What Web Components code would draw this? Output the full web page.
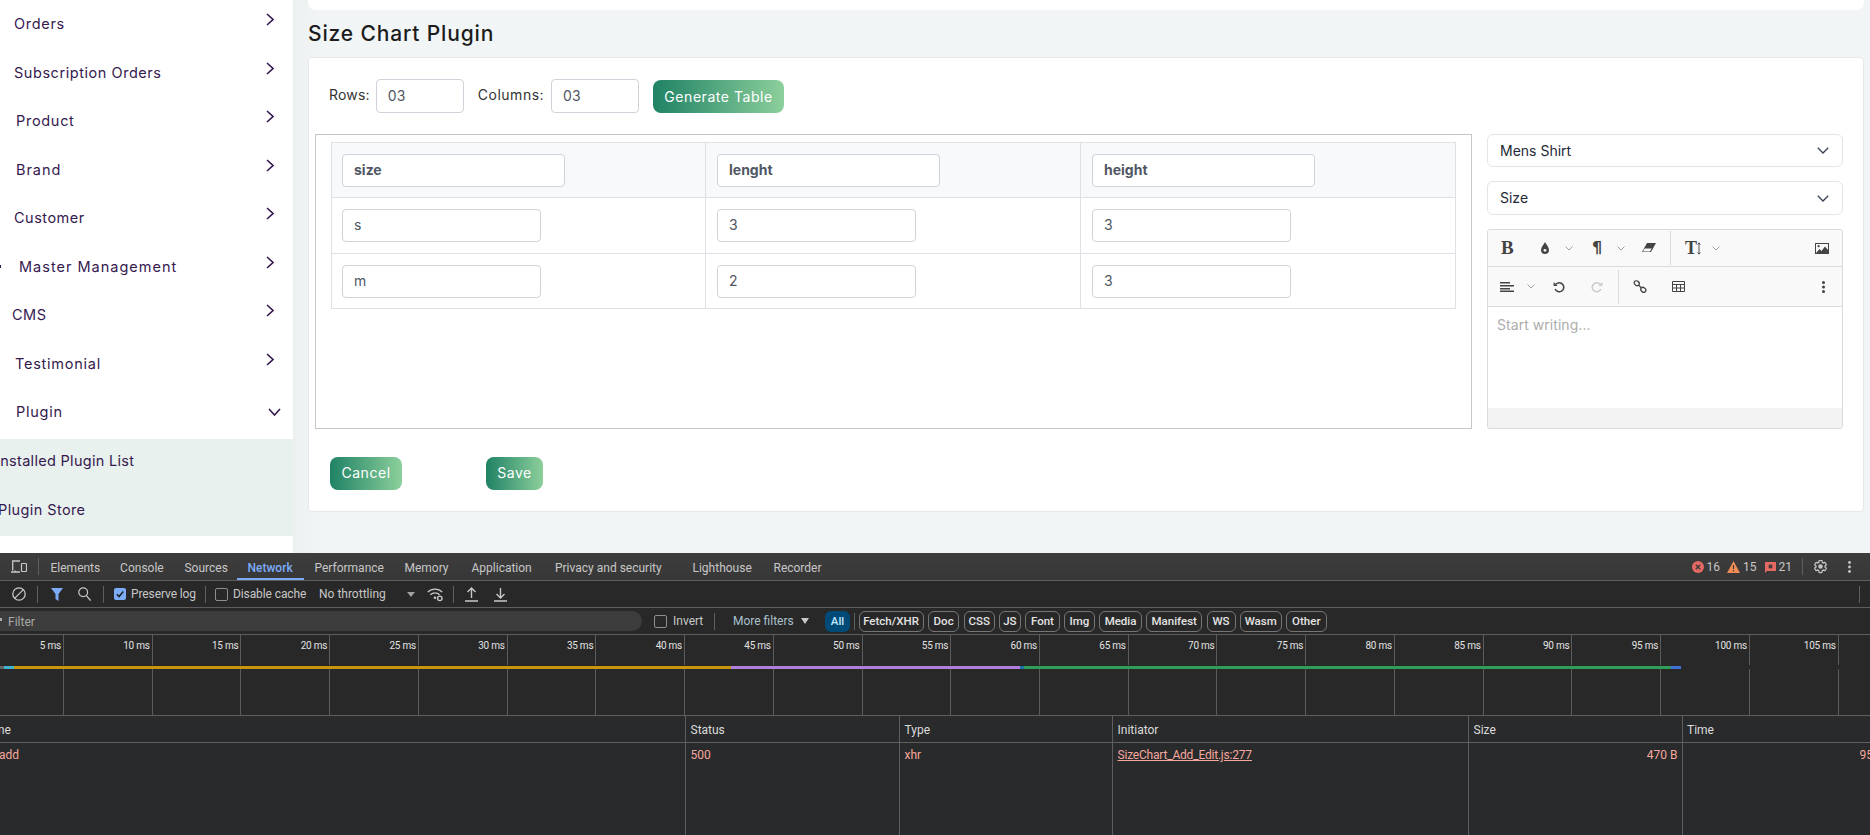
<!DOCTYPE html>
<html>
<head>
<meta charset="utf-8">
<title>Size Chart Plugin</title>
<style>
  html, body { margin: 0; height: 100%; overflow: hidden; background: #f1f5f6; }
  body { font-family: Inter, "Liberation Sans", sans-serif; }
</style>
</head>
<body>
<app-page></app-page>

<script>
const chevRight = `<svg width="8" height="13" viewBox="0 0 8 13"><path d="M1 1l6 5.5L1 12" fill="none" stroke="currentColor" stroke-width="1.6"/></svg>`;
const chevDown = `<svg width="13" height="8" viewBox="0 0 13 8"><path d="M1 1l5.5 6L12 1" fill="none" stroke="currentColor" stroke-width="1.6"/></svg>`;

class BaseElement extends HTMLElement {
  connectedCallback() {
    if (this.shadowRoot) return;
    this.attachShadow({ mode: 'open' });
    this.shadowRoot.innerHTML = `<style>${this.styles()}</style>${this.markup()}`;
  }
  styles() { return ':host { display: block; }'; }
  markup() { return '<slot></slot>'; }
}

class SideItem extends BaseElement {
  styles() {
    return `
      :host { display: flex; align-items: center; height: 48.5px; color: #35194f;
        font: 400 14.5px Inter, sans-serif; letter-spacing: .5px; white-space: nowrap; box-sizing: border-box; }
      :host([sub]) { padding-bottom: 5px; }
      .txt { flex: 1; margin-top: 1px; }
      .arrow { display: flex; margin: 0 19px 7px 0; }
      :host([open]) .arrow { margin: 2px 12px 0 0; }
    `;
  }
  markup() {
    const pad = this.getAttribute('pad') || 0;
    let arrow = '';
    if (this.hasAttribute('open')) arrow = `<span class="arrow">${chevDown}</span>`;
    else if (!this.hasAttribute('sub')) arrow = `<span class="arrow">${chevRight}</span>`;
    return `<span class="txt" style="margin-left:${pad}px"><slot></slot></span>${arrow}`;
  }
}

class AppSidebar extends BaseElement {
  styles() {
    return `
      :host { display: block; width: 293px; flex: none; background: #fff; overflow: hidden; position: relative; }
      .list { margin-top: -1px; }
      .sub { margin-top: 3px; height: 97px; background: #e9f1ee; }
      .stub { position: absolute; left: 0; top: 265px; width: 1px; height: 3px; background: #35194f; }
    `;
  }
  markup() {
    return `
      <span class="stub"></span>
      <div class="list">
        <side-item pad="14" style="letter-spacing:.7px">Orders</side-item>
        <side-item pad="14" style="letter-spacing:.55px">Subscription Orders</side-item>
        <side-item pad="16" style="letter-spacing:.7px">Product</side-item>
        <side-item pad="16" style="letter-spacing:.95px">Brand</side-item>
        <side-item pad="14">Customer</side-item>
        <side-item pad="19" style="letter-spacing:1px">Master Management</side-item>
        <side-item pad="12">CMS</side-item>
        <side-item pad="15" style="letter-spacing:.75px">Testimonial</side-item>
        <side-item pad="16" style="letter-spacing:.75px" open>Plugin</side-item>
        <div class="sub">
          <side-item pad="-4" sub style="letter-spacing:.3px">Installed Plugin List</side-item>
          <side-item pad="-2" sub style="letter-spacing:.4px">Plugin Store</side-item>
        </div>
      </div>
    `;
  }
}

class InputBox extends BaseElement {
  styles() {
    return `
      :host { display: flex; align-items: center; box-sizing: border-box; height: 33px; padding: 0 0 2px 11px;
        background: #fff; border: 1px solid #ced4da; border-radius: 4px;
        font: 400 14px Inter, sans-serif; color: #4f5763; }
      :host([bold]) { font-weight: 700; }
    `;
  }
}

class GradButton extends BaseElement {
  styles() {
    return `
      :host { display: flex; align-items: center; justify-content: center; box-sizing: border-box; height: 33px; flex: none;
        border-radius: 8px; background: linear-gradient(90deg, #1f8265, #8ccf9b);
        color: #fff; font: 400 14px Inter, sans-serif; letter-spacing: .55px; }
    `;
  }
}

class SizeTable extends BaseElement {
  styles() {
    return `
      :host { display: block; flex: none; box-sizing: border-box; width: 1157px; height: 295px;
        border: 1px solid #c6c6c6; padding: 7px 0 0 15px; }
      .grid { display: grid; grid-template-columns: 374px 375px 374px; grid-template-rows: 55px 56px 55px;
        width: 1125px; box-sizing: border-box; border: solid #dee2e6; border-width: 1px 1px 0 1px; }
      .c { border-bottom: 1px solid #dee2e6; border-right: 1px solid #dee2e6; padding: 0 10px; display: flex; align-items: center; box-sizing: border-box; }
      .c:nth-child(3n) { border-right: 0; }
      .c:not(:nth-child(3n+1)) { padding-left: 11px; }
      .h { background: #f8f9fa; }
      .wide { width: 223px; }
      .cell { width: 199px; }
    `;
  }
  markup() {
    const head = ['size', 'lenght', 'height'];
    const rows = [['s', '3', '3'], ['m', '2', '3']];
    return `<div class="grid">
      ${head.map(t => `<div class="c h"><input-box class="wide" bold>${t}</input-box></div>`).join('')}
      ${rows.flat().map(t => `<div class="c"><input-box class="cell">${t}</input-box></div>`).join('')}
    </div>`;
  }
}

class PickSelect extends BaseElement {
  styles() {
    return `
      :host { display: flex; align-items: center; justify-content: space-between; box-sizing: border-box;
        height: 33px; padding: 0 13px 0 12px; border: 1px solid #e1e4e9; border-radius: 6px; background: #fff;
        font: 400 14px Inter, sans-serif; color: #1f2937; }
      span { padding-bottom: 1px; }
      svg { color: #374151; }
    `;
  }
  markup() {
    return `<span><slot></slot></span><svg width="12" height="7" viewBox="0 0 12 7"><path d="M.8.8L6 6 11.2.8" fill="none" stroke="currentColor" stroke-width="1.3"/></svg>`;
  }
}

class TextEditor extends BaseElement {
  styles() {
    return `
      :host { display: flex; flex-direction: column; box-sizing: border-box; height: 200px; flex: none;
        border: 1px solid #dadada; border-radius: 3px; background: #fff; overflow: hidden; }
      .bar { display: flex; align-items: center; box-sizing: border-box; height: 37px; flex: none; background: #f9f9f9; border-bottom: 1px solid #dadada; color: #444; }
      .bar.two { height: 40px; }
      .bar > * { flex: none; }
      .div { width: 1px; height: 34px; background: #dadada; }
      .mini { color: #a0a0a0; }
      .b { font: 700 19px "Liberation Serif", serif; width: 12px; line-height: 20px; }
      .p { font: 700 16px "DejaVu Sans", sans-serif; width: 9px; line-height: 20px; }
      .tt { display: flex; align-items: center; width: 16px; font: 700 18px "Liberation Serif", serif; line-height: 20px; }
      .tt svg { flex: none; margin-left: 0; }
      .body { flex: 1; padding: 9px 9px; font: 400 14px Inter, sans-serif; letter-spacing: .05px; color: #adadad; }
      .status { height: 20px; flex: none; background: #f3f3f3; }
    `;
  }
  markup() {
    const mini = ml => `<svg class="mini" style="margin-left:${ml}px" width="8" height="5" viewBox="0 0 8 5"><path d="M.5.5L4 4 7.5.5" fill="none" stroke="currentColor" stroke-width="1"/></svg>`;
    return `
      <div class="bar">
        <span class="b" style="margin-left:13px">B</span>
        <svg style="margin-left:28px" width="8" height="12" viewBox="0 0 8 12"><path d="M4 0C3 2.4 0 5 0 8a4 4 0 0 0 8 0C8 5 5 2.4 4 0z" fill="#444"/><circle cx="4" cy="8.3" r="1.4" fill="#f9f9f9"/></svg>
        ${mini(16)}
        <span class="p" style="margin-left:19px">¶</span>
        ${mini(16)}
        <svg style="margin-left:17px" width="14" height="10" viewBox="0 0 14 10"><path d="M5 0h9L9 9H0z" fill="#444"/><path d="M2.6 5.4L1 8.4h7l1.7-3z" fill="#f9f9f9"/></svg>
        <span class="div" style="margin-left:14px"></span>
        <span class="tt" style="margin-left:14px">T<svg width="4" height="13" viewBox="0 0 4 13"><path d="M2 1v11M.6 2.6L2 .8l1.4 1.8M.6 10.4L2 12.2l1.4-1.8" fill="none" stroke="#444" stroke-width=".9"/></svg></span>
        ${mini(11)}
        <svg style="margin:0 13px 0 auto" width="14" height="11" viewBox="0 0 14 11"><rect x=".5" y=".5" width="13" height="10" fill="none" stroke="#444"/><path d="M1 10l3.5-4 2 2L10 3.5 13 7v3z" fill="#444"/><circle cx="3.6" cy="3.2" r="1.1" fill="#444"/></svg>
      </div>
      <div class="bar two">
        <svg style="margin-left:12px" width="14" height="10" viewBox="0 0 14 10"><path d="M0 .75h10M0 3.75h14M0 6.75h10M0 9.25h14" stroke="#444" stroke-width="1.4"/></svg>
        ${mini(13)}
        <svg style="margin-left:18px" width="12" height="12" viewBox="0 0 12 12"><path d="M3 3.1A4.5 4.5 0 1 1 2.1 8" fill="none" stroke="#444" stroke-width="1.6"/><path d="M.6 1v4h4z" fill="#444"/></svg>
        <svg style="margin-left:26px" width="12" height="12" viewBox="0 0 12 12"><path d="M9 3.1A4.5 4.5 0 1 0 9.9 8" fill="none" stroke="#ccc" stroke-width="1.6"/><path d="M11.4 1v4h-4z" fill="#ccc"/></svg>
        <span class="div" style="margin-left:15px"></span>
        <svg style="margin-left:14px" width="14" height="13" viewBox="0 0 14 13"><g fill="none" stroke="#444" stroke-width="1.3"><ellipse cx="3.7" cy="3.2" rx="2.7" ry="2.2" transform="rotate(35 3.7 3.2)"/><ellipse cx="10.3" cy="9.8" rx="2.7" ry="2.2" transform="rotate(35 10.3 9.8)"/><path d="M5.5 5l3 3"/></g></svg>
        <svg style="margin-left:25px" width="13" height="11" viewBox="0 0 13 11"><path d="M.5.5h12v10H.5zM.5 3.5h12M.5 7h12M4.5 3v8M8.5 3v8" fill="none" stroke="#444"/></svg>
        <svg style="margin:0 17px 0 auto" width="3" height="12" viewBox="0 0 3 12"><circle cx="1.5" cy="1.5" r="1.5" fill="#444"/><circle cx="1.5" cy="6" r="1.5" fill="#444"/><circle cx="1.5" cy="10.5" r="1.5" fill="#444"/></svg>
      </div>
      <div class="body">Start writing...</div>
      <div class="status"></div>
    `;
  }
}

class SizeCard extends BaseElement {
  styles() {
    return `
      :host { display: block; box-sizing: border-box; height: 455px; background: #fff; border: 1px solid #e6e8ea;
        border-radius: 4px; padding: 21px 0 0 20px; }
      .form { display: flex; align-items: center; height: 34px; font: 400 14px Inter, sans-serif; color: #333; letter-spacing: .2px; }
      .lbl { flex: none; padding-bottom: 3px; }
      .num { width: 88px; height: 34px; flex: none; border-color: #ced4da; }
      .form grad-button { width: 131px; margin-left: 14px; }
      .work { display: flex; margin: 21px 0 0 -14px; }
      .side { width: 356px; margin-left: 15px; display: flex; flex-direction: column; flex: none; }
      pick-select + pick-select { height: 34px; margin: 14px 0 14px; }
      .foot { display: flex; margin: 28px 0 0 1px; }
      .foot grad-button { padding-bottom: 2px; }
    `;
  }
  markup() {
    return `
      <div class="form">
        <span class="lbl">Rows:</span><input-box class="num" style="margin-left:6px">03</input-box>
        <span class="lbl" style="margin-left:14px;letter-spacing:.5px">Columns:</span><input-box class="num" style="margin-left:7px">03</input-box>
        <grad-button>Generate Table</grad-button>
      </div>
      <div class="work">
        <size-table></size-table>
        <div class="side">
          <pick-select>Mens Shirt</pick-select>
          <pick-select>Size</pick-select>
          <text-editor></text-editor>
        </div>
      </div>
      <div class="foot">
        <grad-button style="width:72px">Cancel</grad-button>
        <grad-button style="width:57px;margin-left:84px">Save</grad-button>
      </div>
    `;
  }
}

class MainArea extends BaseElement {
  styles() {
    return `
      :host { display: block; flex: 1; min-width: 0; padding: 0 6px 0 15px;
        background: linear-gradient(90deg, #edf0f1, #f1f5f6 28px); }
      .top { height: 10px; background: #fff; border-radius: 0 0 8px 8px; }
      h1 { margin: 0; height: 47px; display: flex; align-items: center; font: 500 21px Inter, sans-serif; letter-spacing: .85px; color: #1c1c1c; }
    `;
  }
  markup() {
    return `<div class="top"></div><h1>Size Chart Plugin</h1><size-card></size-card>`;
  }
}

class DevTab extends BaseElement {
  styles() {
    return `
      :host { display: flex; align-items: center; box-sizing: border-box; height: 27px; padding: 3px 0 0 10px; flex: none; white-space: nowrap; }
      :host([active]) { color: #7cacf8; box-shadow: inset 0 -2px 0 #7cacf8; font-weight: 500; }
    `;
  }
}

class DevTabs extends BaseElement {
  styles() {
    return `
      :host { display: flex; align-items: center; height: 28px; box-sizing: border-box; background: linear-gradient(#3d3d3d, #373737);
        border-bottom: 1px solid #5e5e5e; font: 400 12px Roboto, sans-serif; color: #c7c7c7; }
      .div { width: 1px; height: 17px; background: #5e5e5e; flex: none; }
      .count { display: flex; align-items: center; margin-left: auto; gap: 3px; padding-top: 1px; }
    `;
  }
  markup() {
    const tabs = [['Elements', 69.6], ['Console', 64.4], ['Sources', 63], ['Network', 67, 1], ['Performance', 90],
      ['Memory', 67], ['Application', 83.5], ['Privacy and security', 137.5], ['Lighthouse', 81], ['Recorder', 70]];
    return `
      <svg style="margin-left:11px;flex:none" width="16" height="13" viewBox="0 0 16 13"><path d="M9 1H1.7v9.5M0 12h9M4 10.5v1.5" fill="none" stroke="#c7c7c7" stroke-width="1.3"/><rect x="10.5" y="3.5" width="5" height="8" rx=".8" fill="none" stroke="#c7c7c7" stroke-width="1.2"/></svg>
      <span class="div" style="margin:0 2px 0 10.5px"></span>
      ${tabs.map(t => `<dev-tab style="width:${t[1]}px" ${t[2] ? 'active' : ''}>${t[0]}</dev-tab>`).join('')}
      <span class="count">
        <svg width="12" height="12" viewBox="0 0 12 12"><circle cx="6" cy="6" r="6" fill="#e46962"/><path d="M3.8 3.8l4.4 4.4M8.2 3.8L3.8 8.2" stroke="#3c3c3c" stroke-width="1.4"/></svg><span>16</span>
        <svg style="margin-left:4px" width="13" height="12" viewBox="0 0 13 12"><path d="M6.5 0L13 12H0z" fill="#f28b54"/><path d="M6.5 4v4M6.5 9v1.5" stroke="#3c3c3c" stroke-width="1.2"/></svg><span>15</span>
        <svg style="margin-left:5px" width="11" height="11" viewBox="0 0 11 11"><path d="M0 0h11v9H2l-2 2z" fill="#e46962"/><rect x="3.7" y="2.7" width="3.6" height="3.6" fill="#3c3c3c"/></svg><span>21</span>
      </span>
      <span class="div" style="margin-left:10px"></span>
      <svg style="margin-left:10px;flex:none" width="15" height="15" viewBox="0 0 24 24"><path d="M19.14 12.94c.04-.3.06-.61.06-.94 0-.32-.02-.64-.07-.94l2.03-1.58a.49.49 0 0 0 .12-.61l-1.92-3.32a.488.488 0 0 0-.59-.22l-2.39.96c-.5-.38-1.03-.7-1.62-.94l-.36-2.54a.484.484 0 0 0-.48-.41h-3.84c-.24 0-.43.17-.47.41l-.36 2.54c-.59.24-1.13.57-1.62.94l-2.39-.96c-.22-.08-.47 0-.59.22L2.74 8.87c-.12.21-.08.47.12.61l2.03 1.58c-.05.3-.09.63-.09.94s.02.64.07.94l-2.03 1.58a.49.49 0 0 0-.12.61l1.92 3.32c.12.22.37.29.59.22l2.39-.96c.5.38 1.03.7 1.62.94l.36 2.54c.05.24.24.41.48.41h3.84c.24 0 .44-.17.47-.41l.36-2.54c.59-.24 1.13-.56 1.62-.94l2.39.96c.22.08.47 0 .59-.22l1.92-3.32c.12-.22.07-.47-.12-.61l-2.01-1.58z" fill="none" stroke="#c7c7c7" stroke-width="2"/><circle cx="12" cy="12" r="3.6" fill="#c7c7c7"/></svg>
      <svg style="margin:0 19px 0 20px;flex:none" width="3" height="12" viewBox="0 0 3 12"><circle cx="1.5" cy="1.5" r="1.4" fill="#c7c7c7"/><circle cx="1.5" cy="6" r="1.4" fill="#c7c7c7"/><circle cx="1.5" cy="10.5" r="1.4" fill="#c7c7c7"/></svg>
    `;
  }
}

class DevToolbar extends BaseElement {
  styles() {
    return `
      :host { display: flex; align-items: center; height: 27px; box-sizing: border-box; background: #282828;
        border-bottom: 1px solid #5e5e5e; font: 400 12px Roboto, sans-serif; color: #c7c7c7; white-space: nowrap; overflow: hidden; }
      .div { width: 1px; height: 17px; background: #5e5e5e; flex: none; }
      .box { width: 11px; height: 11px; border: 1px solid #8e8e8e; border-radius: 2px; flex: none; }
      svg, span { flex: none; }
      .stub { margin-left: auto; width: 1px; height: 17px; background: #5e5e5e; flex: none; margin-right: 10px; }
      .tri { width: 0; height: 0; border: 4px solid transparent; border-top: 5px solid #a0a0a0; border-bottom: 0; flex: none; }
    `;
  }
  markup() {
    return `
      <svg style="margin-left:12px" width="14" height="14" viewBox="0 0 14 14"><circle cx="7" cy="7" r="6.2" fill="none" stroke="#c7c7c7" stroke-width="1.3"/><path d="M2.6 11.4l8.8-8.8" stroke="#c7c7c7" stroke-width="1.3"/></svg>
      <span class="div" style="margin-left:11px"></span>
      <svg style="margin-left:13px" width="12" height="13" viewBox="0 0 12 13"><path d="M0 0h12L7.5 6v7l-3-2V6z" fill="#7cacf8"/></svg>
      <svg style="margin-left:15px" width="13" height="14" viewBox="0 0 13 14"><circle cx="5.2" cy="5.2" r="4.4" fill="none" stroke="#c7c7c7" stroke-width="1.2"/><path d="M8.4 8.6L12.6 13.6" stroke="#c7c7c7" stroke-width="1.3"/></svg>
      <span class="div" style="margin-left:12px"></span>
      <svg style="margin-left:10px" width="12" height="12" viewBox="0 0 12 12"><rect width="12" height="12" rx="2" fill="#7cacf8"/><path d="M2.8 6.2l2.3 2.4 4.2-5" fill="none" stroke="#1f1f1f" stroke-width="1.5"/></svg>
      <span style="margin-left:5px;width:67px;letter-spacing:-.1px">Preserve log</span>
      <span class="div" style="margin-left:7px"></span>
      <span class="box" style="margin-left:9px"></span>
      <span style="margin-left:5px;width:78px;letter-spacing:-.1px">Disable cache</span>
      <span style="margin-left:8px;width:78px">No throttling</span>
      <span class="tri" style="margin-left:10px"></span>
      <svg style="margin-left:12px" width="16" height="15" viewBox="0 0 17 15"><g fill="none" stroke="#c7c7c7" stroke-width="1.4"><path d="M.8 5a11 11 0 0 1 15.4 0"/><path d="M3.6 7.8a7 7 0 0 1 9.8 0"/></g><circle cx="8.5" cy="11" r="1.4" fill="#c7c7c7"/><circle cx="13.6" cy="11.6" r="2.4" fill="none" stroke="#c7c7c7" stroke-width="1.4"/></svg>
      <span class="div" style="margin-left:9.5px"></span>
      <svg style="margin-left:11px" width="13" height="15" viewBox="0 0 13 15"><path d="M6.5 11V1M2.5 5l4-4 4 4M0 14h13" fill="none" stroke="#c7c7c7" stroke-width="1.4"/></svg>
      <svg style="margin-left:16px" width="13" height="15" viewBox="0 0 13 15"><path d="M6.5 1v10M2.5 7l4 4 4-4M0 14h13" fill="none" stroke="#c7c7c7" stroke-width="1.4"/></svg>
      <span class="stub"></span>
    `;
  }
}

class DevFilter extends BaseElement {
  styles() {
    return `
      :host { display: flex; align-items: center; height: 27px; box-sizing: border-box; background: #282828;
        border-bottom: 1px solid #5e5e5e; font: 400 12px Roboto, sans-serif; color: #c7c7c7; white-space: nowrap; }
      .input { position: relative; width: 642px; height: 20px; flex: none; box-sizing: border-box; padding: 1px 0 0 8px; display: flex; align-items: center;
        background: #3c3c3c; border-radius: 0 10px 10px 0; color: #a8a8a8; }
      .input i { position: absolute; left: 0; top: 7px; width: 2px; height: 3px; background: #a8a8a8; }
      .box { width: 11px; height: 11px; border: 1px solid #8e8e8e; border-radius: 2px; flex: none; margin-left: 12px; }
      .div { width: 1px; height: 17px; background: #5e5e5e; flex: none; }
      .tri { width: 0; height: 0; border: 4px solid transparent; border-top: 6px solid #c7c7c7; border-bottom: 0; margin-left: 7px; flex: none; }
      .pills { display: flex; gap: 4.4px; margin-left: 3.5px; }
      .pill { box-sizing: border-box; height: 21px; display: flex; align-items: center; justify-content: center; flex: none;
        border: 1px solid #757575; border-radius: 6px; font-size: 11.5px; font-weight: 500; color: #e3e3e3; }
      .all { width: 25px; height: 21px; margin-left: 16px; display: flex; align-items: center; justify-content: center; flex: none;
        background: #004a77; border-radius: 6px; font-size: 11.5px; font-weight: 500; color: #c2e7ff; }
    `;
  }
  markup() {
    const pills = [['Fetch/XHR', 65], ['Doc', 31.5], ['CSS', 31], ['JS', 21.5], ['Font', 34.8], ['Img', 30.5],
      ['Media', 42.8], ['Manifest', 55.8], ['WS', 29], ['Wasm', 41.6], ['Other', 40.8]];
    return `
      <div class="input"><i></i>Filter</div>
      <span class="box"></span>
      <span style="margin-left:6px;width:35px">Invert</span>
      <span class="div" style="margin-left:6px"></span>
      <span style="margin-left:18px;width:61px;color:#a8c0cc">More filters</span>
      <span class="tri"></span>
      <span class="all">All</span>
      <span class="div" style="margin-left:4px"></span>
      <div class="pills">${pills.map(p => `<span class="pill" style="width:${p[1]}px">${p[0]}</span>`).join('')}</div>
    `;
  }
}

class DevOverview extends BaseElement {
  styles() {
    return `
      :host { display: block; position: relative; height: 81px; box-sizing: border-box; background: #282828; border-bottom: 1px solid #5e5e5e; overflow: hidden; }
      .cells { display: flex; height: 100%; }
      .cell { flex: none; box-sizing: border-box; width: 88.74px; border-right: 1px solid #5b5b5b; text-align: right; padding: 4px 2px 0 0;
        font: 400 10px/13px Roboto, sans-serif; letter-spacing: -.25px; color: #e3e3e3; white-space: nowrap; }
      .cell.first { width: 63.9px; }
      .cell.last { border-right: 0; }
      .strip { position: absolute; left: 0; right: 0; top: 30px; height: 4px; background: #282828; display: flex; align-items: center; }
      .strip i { display: block; height: 3px; flex: none; }
    `;
  }
  markup() {
    let cells = '';
    for (let i = 1; i <= 21; i++) cells += `<div class="cell ${i === 1 ? 'first' : ''}">${i * 5} ms</div>`;
    cells += '<div class="cell last"></div>';
    const segs = [[4, '#666'], [10, '#3fb2d0'], [716.6, '#c8960c'], [289, '#b07fdb'], [4.5, '#1f6fa8'], [647, '#2f9e5b'], [10, '#3f6fd4']];
    return `<div class="cells">${cells}</div>
      <div class="strip">${segs.map(s => `<i style="width:${s[0]}px;background:${s[1]}"></i>`).join('')}</div>`;
  }
}

class DevRequests extends BaseElement {
  styles() {
    return `
      :host { display: block; flex: 1; overflow: hidden; background: #292a2b; font: 400 12px Roboto, sans-serif; color: #dcdcdc; white-space: nowrap; }
      .row { display: grid; grid-template-columns: 685px 214px 213px 356px 213.5px 1fr; }
      .row > div { box-sizing: border-box; padding-left: 4.5px; display: flex; align-items: center; overflow: hidden; border-left: 1px solid #5e5e5e; }
      .row > div:first-child { border-left: 0; padding-left: 0; }
      .head { height: 27px; border-bottom: 1px solid #5e5e5e; box-sizing: border-box; }
      .head > div { padding-top: 1px; }
      .data { height: 93px; color: #f5a89e; }
      .data > div { align-items: flex-start; padding-top: 5px; }
      a { color: #f5a89e; text-decoration: underline; letter-spacing: -.2px; }
    `;
  }
  markup() {
    return `
      <div class="row head">
        <div><span style="margin-left:-21px">Name</span></div><div>Status</div><div>Type</div><div>Initiator</div><div>Size</div><div>Time</div>
      </div>
      <div class="row data">
        <div><span style="margin-left:-1px">add</span></div><div>500</div><div>xhr</div>
        <div><a>SizeChart_Add_Edit.js:277</a></div>
        <div style="justify-content:flex-end;padding-right:4px">470 B</div>
        <div style="padding-left:177px">95 ms</div>
      </div>
    `;
  }
}

class DevPanel extends BaseElement {
  styles() {
    return `:host { display: flex; flex-direction: column; height: 282px; flex: none; background: #282828; }`;
  }
  markup() {
    return `<dev-tabs></dev-tabs><dev-toolbar></dev-toolbar><dev-filter></dev-filter><dev-overview></dev-overview><dev-requests></dev-requests>`;
  }
}

class AppPage extends BaseElement {
  styles() {
    return `
      :host { display: flex; flex-direction: column; width: 1870px; height: 835px; overflow: hidden; }
      .site { display: flex; height: 553px; flex: none; overflow: hidden; }
    `;
  }
  markup() {
    return `<div class="site"><app-sidebar></app-sidebar><main-area></main-area></div><dev-panel></dev-panel>`;
  }
}

customElements.define('side-item', SideItem);
customElements.define('app-sidebar', AppSidebar);
customElements.define('input-box', InputBox);
customElements.define('grad-button', GradButton);
customElements.define('size-table', SizeTable);
customElements.define('pick-select', PickSelect);
customElements.define('text-editor', TextEditor);
customElements.define('size-card', SizeCard);
customElements.define('main-area', MainArea);
customElements.define('dev-tab', DevTab);
customElements.define('dev-tabs', DevTabs);
customElements.define('dev-toolbar', DevToolbar);
customElements.define('dev-filter', DevFilter);
customElements.define('dev-overview', DevOverview);
customElements.define('dev-requests', DevRequests);
customElements.define('dev-panel', DevPanel);
customElements.define('app-page', AppPage);
</script>
</body>
</html>
